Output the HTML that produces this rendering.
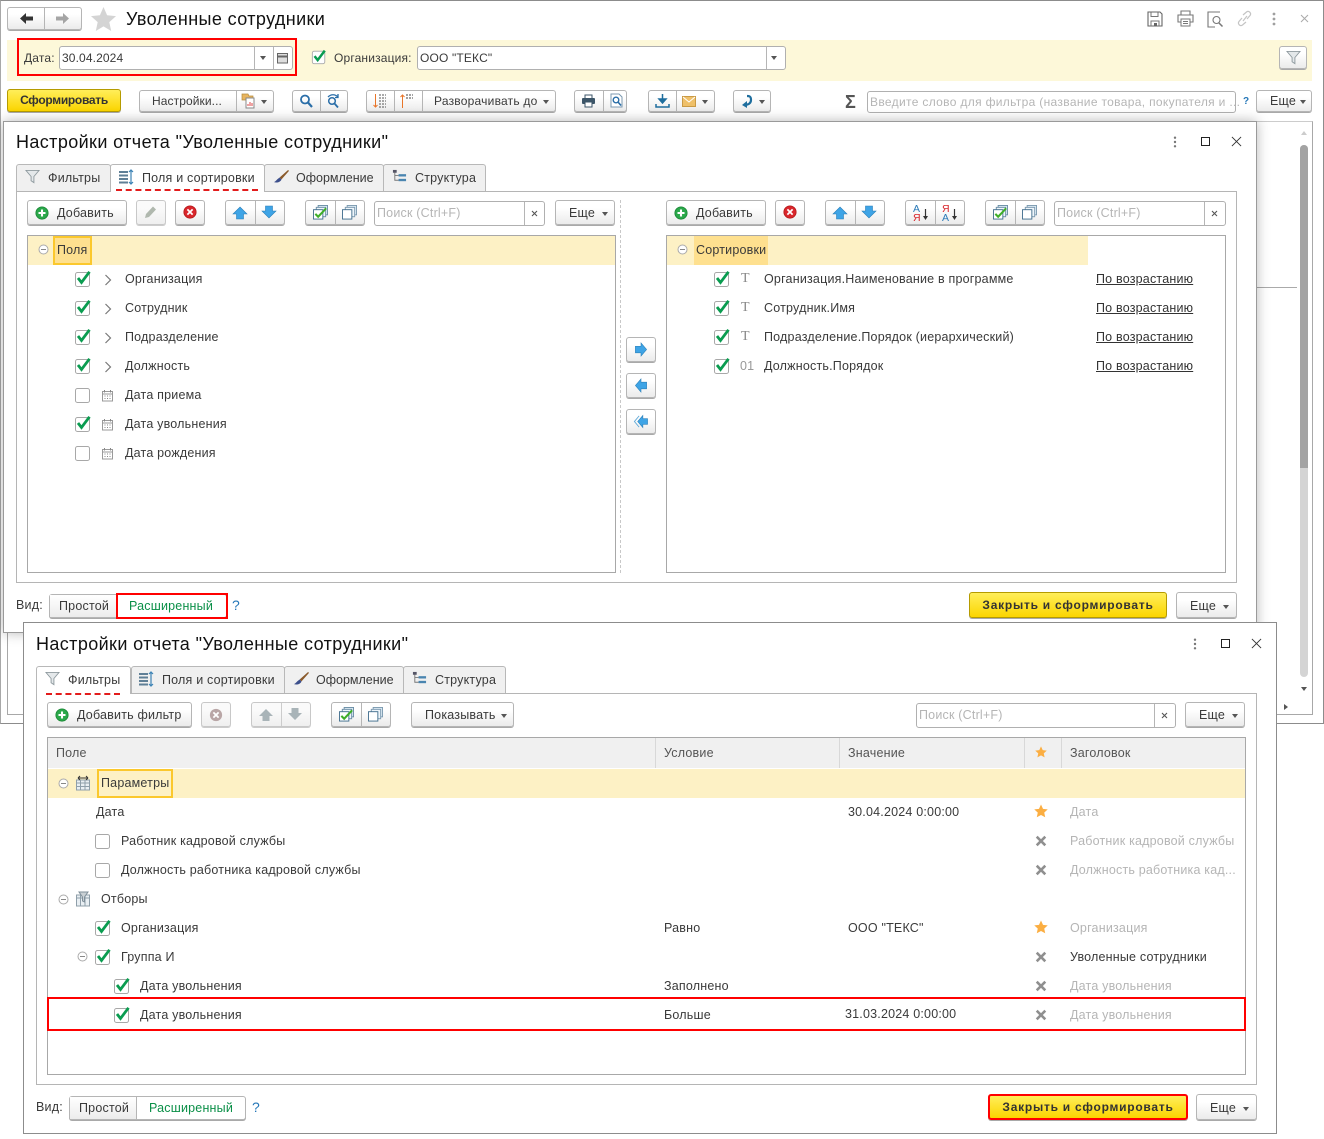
<!DOCTYPE html>
<html lang="ru"><head><meta charset="utf-8"><title>Уволенные сотрудники</title>
<style>
html,body{margin:0;padding:0;background:#fff}
#r{position:relative;width:1324px;height:1139px;overflow:hidden;background:#fff;font-family:"Liberation Sans",sans-serif;font-size:12px;color:#3a3a3a}
#r div,#r svg,#r span{position:absolute;box-sizing:border-box}
.t{white-space:nowrap;line-height:16px;height:16px;font-size:12.5px;letter-spacing:.2px}
.n{font-size:12px;letter-spacing:.16px}
.h{font-size:18px;line-height:22px;height:22px;color:#111;letter-spacing:.39px;white-space:nowrap}
.b{border:1px solid #b5b5b5;border-radius:3px;background:linear-gradient(#fff 30%,#ebebeb);box-shadow:0 1px 0 #a9a9a9}
.d{border:1px solid #c8c8c8;border-radius:3px;background:linear-gradient(#fafafa 30%,#efefef);box-shadow:0 1px 0 #ccc}
.y{border:1px solid #b59b00;border-radius:3px;background:linear-gradient(#ffee5a,#fbd500);box-shadow:0 1px 0 #a9a9a9;font-weight:bold;text-align:center;color:#333;line-height:24px;white-space:nowrap;letter-spacing:.75px}
.v{width:1px;background:#b5b5b5}
.f{border:1px solid #b0b0b0;border-radius:3px;background:#fff}
.g{color:#b5b5b5}
.u{text-decoration:underline;color:#333}
.tab{border:1px solid #b8b8b8;border-bottom:0;border-radius:3px 3px 0 0;background:#f0f0f0}
.tab.a{background:#fff;height:28px!important;z-index:2}
.red{border:2px solid #f00}
.dash{height:0;border-top:2px dashed #e31c1c}
.ar{width:0;height:0;border-left:3.5px solid transparent;border-right:3.5px solid transparent;border-top:4px solid #555}
</style></head><body><div id="r">
<svg width="0" height="0" style="left:0;top:0"><defs>
<symbol id="cb" viewBox="0 0 18 18"><rect x="1.5" y="2.500" width="14" height="14" rx="2" fill="#fff" stroke="#a8a8a8"/><path d="M4 8l3.500 4.500L15.500 1.800" fill="none" stroke="#0a9c50" stroke-width="2.800"/></symbol>
<symbol id="ce" viewBox="0 0 18 18"><rect x="1.5" y="2.500" width="14" height="14" rx="2" fill="#fff" stroke="#a8a8a8"/></symbol>
<symbol id="plus" viewBox="0 0 16 16"><circle cx="8" cy="8" r="7" fill="#2aa84a" stroke="#1d8a38"/><path d="M8 4v8M4 8h8" stroke="#fff" stroke-width="2.4"/></symbol>
<symbol id="del" viewBox="0 0 16 16"><circle cx="8" cy="8" r="7" fill="#d9262c" stroke="#b71c1c"/><path d="M5 5l6 6M11 5l-6 6" stroke="#fff" stroke-width="2"/></symbol>
<symbol id="dg" viewBox="0 0 16 16"><circle cx="8" cy="8" r="7" fill="#b9a6a6"/><path d="M5 5l6 6M11 5l-6 6" stroke="#fff" stroke-width="2"/></symbol>
<symbol id="up" viewBox="0 0 16 14"><path d="M8 1l7 7h-3.500v5h-7v-5H1z" fill="#3ea4e6" stroke="#2a7fb8" stroke-width=".6"/></symbol>
<symbol id="dn" viewBox="0 0 16 14"><path d="M4.500 1h7v5H15l-7 7-7-7h3.500z" fill="#3ea4e6" stroke="#2a7fb8" stroke-width=".6"/></symbol>
<symbol id="ug" viewBox="0 0 16 14"><path d="M8 1l7 7h-3.500v5h-7v-5H1z" fill="#a9b4b8"/></symbol>
<symbol id="dgg" viewBox="0 0 16 14"><path d="M4.500 1h7v5H15l-7 7-7-7h3.500z" fill="#a9b4b8"/></symbol>
<symbol id="rt" viewBox="0 0 14 16"><path d="M1 4.500h6V1l6 7-6 7v-3.500H1z" fill="#3ea4e6" stroke="#2a7fb8" stroke-width=".6"/></symbol>
<symbol id="lt" viewBox="0 0 14 16"><path d="M13 4.500H7V1L1 8l6 7v-3.500h6z" fill="#3ea4e6" stroke="#2a7fb8" stroke-width=".6"/></symbol>
<symbol id="ll" viewBox="0 0 16 16"><path d="M15 5h-5V1.500L4.500 8l5.500 6.500V11h5z" fill="#3ea4e6" stroke="#2a7fb8" stroke-width=".6"/><path d="M6 2L1 8l5 6" fill="none" stroke="#5fa9d8"/></symbol>
<symbol id="all" viewBox="0 0 16 16"><rect x="5.500" y=".5" width="10" height="10" fill="#dcebf5" stroke="#6c8ea6"/><rect x="3.500" y="2.500" width="10" height="10" fill="#eef5fa" stroke="#6c8ea6"/><rect x=".5" y="5" width="10" height="10" fill="#fff" stroke="#44708f"/><path d="M2.500 9.500l3 3L14 3.500" fill="none" stroke="#3fae29" stroke-width="2.200"/></symbol>
<symbol id="non" viewBox="0 0 16 16"><rect x="5.500" y=".5" width="10" height="10" fill="#dcebf5" stroke="#7c9ab0"/><rect x="3.500" y="2.500" width="10" height="10" fill="#eef5fa" stroke="#7c9ab0"/><rect x=".5" y="5" width="10" height="10" fill="#fff" stroke="#44708f"/></symbol>
<symbol id="fn" viewBox="0 0 16 16"><path d="M1 1.500h14L9.500 8v6.500l-3-2V8z" fill="#e4e8ea" stroke="#8f9a9f"/></symbol>
<symbol id="flds" viewBox="0 0 16 16"><path d="M1 2h9v2H1zM1 5.500h9v2H1zM1 9h9v2H1zM1 12.500h9v2H1z" fill="#5f7f96"/><path d="M13 1v14M11 3l2-2 2 2M11 13l2 2 2-2" fill="none" stroke="#3c83b5" stroke-width="1.200"/></symbol>
<symbol id="br" viewBox="0 0 18 16"><path d="M7 9l9-8 1 1-8 9z" fill="#8a5a2b"/><path d="M7 9l2 2c-1 3-5 4-8 3 2-1 3-3 6-5z" fill="#3c4f8c"/></symbol>
<symbol id="st" viewBox="0 0 16 16"><path d="M3 3v9h4M3 7h4" fill="none" stroke="#777"/><rect x="1" y="1" width="4" height="3" fill="#556"/><rect x="7" y="5.500" width="8" height="2.500" fill="#4a85b0"/><rect x="7" y="10.500" width="8" height="2.500" fill="#4a85b0"/></symbol>
<symbol id="cal" viewBox="0 0 13 13"><rect x="1.500" y="2.500" width="10" height="9.500" fill="none" stroke="#9a9a9a"/><path d="M1.500 5h10" stroke="#9a9a9a"/><path d="M3.500 1v2.500M9.500 1v2.500" stroke="#888"/><path d="M3.500 7h1M6 7h1M8.500 7h1M3.500 9.500h1M6 9.500h1M8.500 9.500h1" stroke="#888"/></symbol>
<symbol id="star" viewBox="0 0 16 16"><path d="M8 .5l2.300 5 5.400.6-4 3.700 1.100 5.400L8 12.500l-4.800 2.700 1.100-5.400-4-3.700 5.400-.6z" fill="#fbae42"/></symbol>
<symbol id="xg" viewBox="0 0 14 14"><path d="M2 2l10 10M12 2L2 12" stroke="#8f8f8f" stroke-width="3"/></symbol>
<symbol id="mn" viewBox="0 0 11 11"><circle cx="5.500" cy="5.500" r="4.500" fill="#fff" stroke="#aaa"/><path d="M3 5.500h5" stroke="#888"/></symbol>
<symbol id="chev" viewBox="0 0 8 12"><path d="M1.500 1l5 5-5 5" fill="none" stroke="#777" stroke-width="1.200"/></symbol>
<symbol id="drag" viewBox="0 0 4 14"><circle cx="2" cy="2" r="1.400" fill="#777"/><circle cx="2" cy="7" r="1.400" fill="#777"/><circle cx="2" cy="12" r="1.400" fill="#777"/></symbol>
<symbol id="cl" viewBox="0 0 12 12"><path d="M1 1l10 10M11 1L1 11" stroke="#333"/></symbol>
<symbol id="sx" viewBox="0 0 7 7"><path d="M1 1l5 5M6 1L1 6" stroke="#555" stroke-width="1.100"/></symbol>
<symbol id="par" viewBox="0 0 16 16"><path d="M1.500 5h13v10h-13zM5.500 5v10M10 5v10M1.500 8h13M1.500 11.500h13" fill="#e9eff3" stroke="#8f9faa"/><path d="M3 3h10M3 3l2-2M3 3l2 2M13 3l-2-2M13 3l-2 2" fill="none" stroke="#333"/></symbol>
<symbol id="otb" viewBox="0 0 16 16"><path d="M1.500 4h13v11h-13zM5.500 4v11M10 4v11M1.500 7h13" fill="#e9eff3" stroke="#8f9faa"/><path d="M4 1h9L9.500 6v5l-2-1V6z" fill="#c9d0d4" stroke="#7f8f9a"/></symbol>
<symbol id="sa" viewBox="0 0 17 18"><text x="0" y="8" font-size="10.500" fill="#2a7ab8" font-family="Liberation Sans">А</text><text x="0" y="17" font-size="10.500" fill="#d8262c" font-family="Liberation Sans">Я</text><path d="M12.500 5v8" stroke="#333" stroke-width="1.200"/><path d="M10 12h5l-2.500 4z" fill="#333"/></symbol>
<symbol id="sb" viewBox="0 0 17 18"><text x="0" y="8" font-size="10.500" fill="#d8262c" font-family="Liberation Sans">Я</text><text x="0" y="17" font-size="10.500" fill="#2a7ab8" font-family="Liberation Sans">А</text><path d="M12.500 5v8" stroke="#333" stroke-width="1.200"/><path d="M10 12h5l-2.500 4z" fill="#333"/></symbol>
</defs></svg>

<!-- main window -->
<div style="left:0;top:0;width:1324px;height:724px;border:1px solid #8c8c8c;border-left-color:#a8a8a8"></div>
<div class="b" style="left:7px;top:7px;width:75px;height:23px"></div><div class="v" style="left:44px;top:8px;height:21px"></div>
<svg style="left:19px;top:12px" width="15" height="13"><path d="M7 1L1 6.500 7 12V8.500h7v-4H7z" fill="#333"/></svg>
<svg style="left:55px;top:12px" width="15" height="13"><path d="M8 1l6 5.500L8 12V8.500H1v-4h7z" fill="#a5a5a5"/></svg>
<svg style="left:91px;top:7px" width="25" height="24"><path d="M12.500 0l3.600 8.200 8.900.9-6.700 6 1.900 8.900-7.700-4.600L4.800 24l1.900-8.900L0 9.100l8.900-.9z" fill="#d4d4d4"/></svg>
<div class="h" style="left:126px;top:8px">Уволенные сотрудники</div>
<svg style="left:1147px;top:11px" width="16" height="16"><path d="M1 1h12l2 2v12H1z" fill="none" stroke="#666" stroke-width="1.100"/><path d="M4 1.500v4h7v-4M4 15v-5h8v5" fill="none" stroke="#777"/><rect x="7" y="12" width="3" height="3" fill="#666"/></svg>
<svg style="left:1177px;top:10px" width="17" height="17"><path d="M4 5V1h9v4M3.500 12H1V5h15v7h-2.500" fill="none" stroke="#777" stroke-width="1.100"/><rect x="4" y="9" width="9" height="7" fill="#fff" stroke="#777"/><path d="M6 11.500h5M6 13.500h5" stroke="#777"/></svg>
<svg style="left:1207px;top:11px" width="17" height="17"><path d="M13 1H1v15h7" fill="none" stroke="#777" stroke-width="1.100"/><circle cx="9.500" cy="9" r="3.500" fill="none" stroke="#777" stroke-width="1.100"/><path d="M12 12l3.500 3.500" stroke="#777" stroke-width="1.500"/></svg>
<svg style="left:1236px;top:10px" width="17" height="17"><path d="M7 11l4-5M6 8l-3 3.500a2.500 2.500 0 0 0 3.500 3.500L10 12M11 9l3-3.500A2.500 2.500 0 0 0 10.500 2L7 5" fill="none" stroke="#c4c4c4" stroke-width="1.200"/></svg>
<svg style="left:1272px;top:12px" width="4" height="14" opacity=".7"><use href="#drag"/></svg>
<svg style="left:1300px;top:14px" width="9" height="9"><path d="M1 1l7 7M8 1L1 8" stroke="#aaa"/></svg>

<div style="left:7px;top:40px;width:1305px;height:41px;background:#fdf8d9"></div>
<div class="red" style="left:17px;top:38px;width:280px;height:38px"></div>
<div class="t n" style="left:24px;top:50px">Дата:</div>
<div class="f" style="left:59px;top:46px;width:234px;height:24px"></div><div class="v" style="left:254px;top:47px;height:22px"></div><div class="v" style="left:273px;top:47px;height:22px"></div>
<div class="t n" style="left:62px;top:50px;letter-spacing:.12px">30.04.2024</div>
<div class="ar" style="left:260px;top:56px"></div>
<svg style="left:276px;top:51px" width="13" height="13"><rect x="1.500" y="2.500" width="10" height="9.500" fill="#ddd" stroke="#666"/><path d="M1.500 5.500h10" stroke="#666" stroke-width="2"/></svg>
<svg style="left:311px;top:49px" width="16" height="16"><use href="#cb"/></svg>
<div class="t n" style="left:334px;top:50px">Организация:</div>
<div class="f" style="left:417px;top:46px;width:369px;height:24px"></div><div class="v" style="left:766px;top:47px;height:22px"></div>
<div class="t n" style="left:420px;top:50px">ООО "ТЕКС"</div>
<div class="ar" style="left:771px;top:56px"></div>
<div class="b" style="left:1279px;top:46px;width:28px;height:23px"></div>
<svg style="left:1286px;top:50px" width="15" height="15"><use href="#fn"/></svg>

<!-- main toolbar -->
<div class="y" style="left:7px;top:89px;width:114px;height:23px;line-height:21px;letter-spacing:-.3px">Сформировать</div>
<div class="b" style="left:139px;top:90px;width:135px;height:22px"></div><div class="v" style="left:236px;top:91px;height:20px"></div>
<div class="t n" style="left:152px;top:93px;letter-spacing:.09px">Настройки...</div>
<svg style="left:241px;top:93px" width="15" height="16"><path d="M1 1h6l1 2h4v4H1z" fill="#e8b560" stroke="#b58a3c" stroke-width=".7"/><rect x="5" y="5" width="8" height="10" fill="#fff" stroke="#888"/><path d="M7 13v-2M9 13V9M11 13v-3" stroke="#d44"/></svg>
<div class="ar" style="left:261px;top:100px"></div>
<div class="b" style="left:292px;top:90px;width:56px;height:22px"></div><div class="v" style="left:320px;top:91px;height:20px"></div>
<svg style="left:299px;top:94px" width="15" height="14"><circle cx="6" cy="5.500" r="4" fill="none" stroke="#2a6ea8" stroke-width="1.800"/><path d="M9 8.500l4 4.500" stroke="#2a6ea8" stroke-width="2.200"/></svg>
<svg style="left:326px;top:93px" width="16" height="15"><circle cx="6" cy="8" r="3.300" fill="none" stroke="#2a6ea8" stroke-width="1.500"/><path d="M8.500 10.500l3.500 4" stroke="#2a6ea8" stroke-width="1.800"/><path d="M2 4c3-3 7-3 10 0M12 1v3.500H9" fill="none" stroke="#2a6ea8" stroke-width="1.300"/></svg>
<div class="b" style="left:366px;top:90px;width:190px;height:22px"></div><div class="v" style="left:394px;top:91px;height:20px"></div><div class="v" style="left:422px;top:91px;height:20px"></div>
<svg style="left:373px;top:93px" width="15" height="16"><path d="M2.500 1v13M.5 12l2 2 2-2" fill="none" stroke="#e8762a"/><path d="M6 2h7M6 5h7M6 8h7M6 11h7M6 14h7" stroke="#555" stroke-dasharray="2 1"/></svg>
<svg style="left:400px;top:93px" width="15" height="16"><path d="M2.500 15V2M.5 4l2-2 2 2" fill="none" stroke="#e8762a"/><path d="M6 2h7M6 5h7" stroke="#444" stroke-dasharray="2 1"/></svg>
<div class="t n" style="left:434px;top:93px;letter-spacing:.22px">Разворачивать до</div>
<div class="ar" style="left:543px;top:100px"></div>
<div class="b" style="left:574px;top:90px;width:53px;height:22px"></div><div class="v" style="left:603px;top:91px;height:20px"></div>
<svg style="left:581px;top:94px" width="15" height="14"><path d="M4 4V1h7v3" fill="none" stroke="#3c5568"/><rect x="1" y="4" width="13" height="6" rx="1" fill="#3c5568"/><rect x="4" y="8" width="7" height="5" fill="#fff" stroke="#3c5568"/></svg>
<svg style="left:610px;top:93px" width="13" height="15"><path d="M1 1h8l3 3v10H1z" fill="#fff" stroke="#7c9ab0"/><circle cx="6" cy="7" r="2.800" fill="none" stroke="#2a6ea8" stroke-width="1.400"/><path d="M8 9l3 3.500" stroke="#2a6ea8" stroke-width="1.600"/></svg>
<div class="b" style="left:648px;top:90px;width:67px;height:22px"></div><div class="v" style="left:676px;top:91px;height:20px"></div>
<svg style="left:655px;top:94px" width="15" height="14"><path d="M7.500 0v6M4 5l3.500 4L11 5z" fill="#1e6e9e" stroke="#1e6e9e" stroke-width="1.500"/><path d="M1 10v3h13v-3" fill="none" stroke="#1e6e9e" stroke-width="1.500"/></svg>
<svg style="left:682px;top:96px" width="14" height="11"><rect x=".5" y=".5" width="13" height="10" fill="#efc069" stroke="#c99a45"/><path d="M1 1l6 5 6-5" fill="none" stroke="#fff"/></svg>
<div class="ar" style="left:702px;top:100px"></div>
<div class="b" style="left:733px;top:90px;width:38px;height:22px"></div>
<svg style="left:741px;top:94px" width="13" height="14"><path d="M5 11H3c3 0 7-1 7-5s-2-4-4-4" fill="none" stroke="#1e6e9e" stroke-width="2.200"/><path d="M6 7l-5 4 5 3z" fill="#1e6e9e"/></svg>
<div class="ar" style="left:759px;top:100px"></div>
<div class="t" style="left:845px;top:92px;font-size:18px;line-height:20px;height:20px;color:#555;font-weight:bold">Σ</div>
<div class="f" style="left:867px;top:91px;width:369px;height:22px"></div>
<div class="t n g" style="left:870px;top:94px;letter-spacing:.33px">Введите слово для фильтра (название товара, покупателя и ...</div>
<div class="t n" style="left:1243px;top:94px;color:#2577b8;font-size:10px;font-weight:bold">?</div>
<div class="b" style="left:1256px;top:90px;width:56px;height:22px"></div>
<div class="t" style="left:1270px;top:93px">Еще</div><div class="ar" style="left:1300px;top:100px"></div>

<!-- report frame -->
<div style="left:7px;top:121px;width:1306px;height:594px;border:1px solid #a8a8a8;border-top-color:#ccc"></div>
<div style="left:1250px;top:287px;width:47px;height:1px;background:#aaa"></div>
<div style="left:1300px;top:145px;width:8px;height:532px;border-radius:4px;background:#d4d4d4"></div>
<div style="left:1300px;top:145px;width:8px;height:323px;border-radius:4px 4px 0 0;background:#a3a3a3"></div>
<div style="left:1301px;top:131px;width:0;height:0;border-left:3px solid transparent;border-right:3px solid transparent;border-bottom:4px solid #ccc"></div>
<div style="left:1301px;top:687px;width:0;height:0;border-left:3px solid transparent;border-right:3px solid transparent;border-top:4px solid #555"></div>
<div style="left:1284px;top:704px;width:0;height:0;border-top:3px solid transparent;border-bottom:3px solid transparent;border-left:4px solid #555"></div>

<!-- DIALOG 1 -->
<div style="left:3px;top:121px;width:1254px;height:512px;background:#fff;border:1px solid #9a9a9a;box-shadow:0 0 12px rgba(0,0,0,.28)"></div>
<div class="h" style="left:16px;top:131px">Настройки отчета "Уволенные сотрудники"</div>
<svg style="left:1173px;top:136px" width="4" height="12"><use href="#drag"/></svg>
<div style="left:1201px;top:137px;width:9px;height:9px;border:1px solid #222"></div>
<svg style="left:1231px;top:136px" width="11" height="11"><use href="#cl"/></svg>
<div style="left:16px;top:191px;width:1221px;height:392px;border:1px solid #b5b5b5"></div>
<div class="tab" style="left:16px;top:164px;width:95px;height:27px"></div>
<div class="tab a" style="left:110px;top:164px;width:155px;height:28px"></div>
<div class="tab" style="left:264px;top:164px;width:120px;height:27px"></div>
<div class="tab" style="left:383px;top:164px;width:103px;height:27px"></div>
<svg style="left:25px;top:169px;z-index:3" width="15" height="15"><use href="#fn"/></svg><div class="t" style="left:48px;top:170px;z-index:3">Фильтры</div>
<svg style="left:118px;top:169px;z-index:3" width="16" height="16"><use href="#flds"/></svg><div class="t" style="left:142px;top:170px;z-index:3">Поля и сортировки</div>
<div class="dash" style="left:116px;top:189px;width:142px;z-index:3"></div>
<svg style="left:273px;top:169px;z-index:3" width="17" height="15"><use href="#br"/></svg><div class="t" style="left:296px;top:170px;z-index:3;letter-spacing:0">Оформление</div>
<svg style="left:392px;top:169px;z-index:3" width="15" height="15"><use href="#st"/></svg><div class="t" style="left:415px;top:170px;z-index:3">Структура</div>

<!-- left toolbar -->
<div class="b" style="left:27px;top:200px;width:100px;height:25px"></div>
<svg style="left:35px;top:206px" width="14" height="14"><use href="#plus"/></svg><div class="t" style="left:57px;top:205px">Добавить</div>
<div class="d" style="left:136px;top:200px;width:30px;height:25px"></div>
<svg style="left:144px;top:205px" width="14" height="14"><path d="M1 13l1-4 7-7.500 3 3L5 12z" fill="#b0b8ae"/></svg>
<div class="b" style="left:175px;top:200px;width:30px;height:25px"></div>
<svg style="left:183px;top:205px" width="14" height="14"><use href="#del"/></svg>
<div class="b" style="left:225px;top:200px;width:60px;height:25px"></div><div class="v" style="left:255px;top:201px;height:23px"></div>
<svg style="left:232px;top:206px" width="16" height="14"><use href="#up"/></svg><svg style="left:261px;top:205px" width="16" height="14"><use href="#dn"/></svg>
<div class="b" style="left:305px;top:200px;width:60px;height:25px"></div><div class="v" style="left:335px;top:201px;height:23px"></div>
<svg style="left:313px;top:205px" width="15" height="15"><use href="#all"/></svg><svg style="left:342px;top:205px" width="15" height="15"><use href="#non"/></svg>
<div class="f" style="left:374px;top:201px;width:171px;height:25px"></div><div class="v" style="left:524px;top:202px;height:23px"></div>
<div class="t g" style="left:377px;top:205px">Поиск (Ctrl+F)</div>
<svg style="left:531px;top:210px" width="7" height="7"><use href="#sx"/></svg>
<div class="b" style="left:555px;top:200px;width:60px;height:25px"></div><div class="t" style="left:569px;top:205px">Еще</div><div class="ar" style="left:602px;top:212px"></div>

<!-- left tree -->
<div style="left:27px;top:235px;width:589px;height:338px;border:1px solid #a8a8a8"></div>
<div style="left:28px;top:236px;width:587px;height:29px;background:#fdf1c5"></div>
<svg style="left:38px;top:244px" width="11" height="11"><use href="#mn"/></svg>
<div style="left:53px;top:236px;width:39px;height:29px;background:#fee08f;border:2px solid #fbc82d"></div>
<div class="t" style="left:57px;top:242px">Поля</div>
<svg style="left:74px;top:270px" width="18" height="18"><use href="#cb"/></svg><svg style="left:104px;top:274px" width="8" height="12"><use href="#chev"/></svg><div class="t" style="left:125px;top:271px">Организация</div>
<svg style="left:74px;top:299px" width="18" height="18"><use href="#cb"/></svg><svg style="left:104px;top:303px" width="8" height="12"><use href="#chev"/></svg><div class="t" style="left:125px;top:300px">Сотрудник</div>
<svg style="left:74px;top:328px" width="18" height="18"><use href="#cb"/></svg><svg style="left:104px;top:332px" width="8" height="12"><use href="#chev"/></svg><div class="t" style="left:125px;top:329px">Подразделение</div>
<svg style="left:74px;top:357px" width="18" height="18"><use href="#cb"/></svg><svg style="left:104px;top:361px" width="8" height="12"><use href="#chev"/></svg><div class="t" style="left:125px;top:358px">Должность</div>
<svg style="left:74px;top:386px" width="18" height="18"><use href="#ce"/></svg><svg style="left:101px;top:389px" width="13" height="13"><use href="#cal"/></svg><div class="t" style="left:125px;top:387px">Дата приема</div>
<svg style="left:74px;top:415px" width="18" height="18"><use href="#cb"/></svg><svg style="left:101px;top:418px" width="13" height="13"><use href="#cal"/></svg><div class="t" style="left:125px;top:416px">Дата увольнения</div>
<svg style="left:74px;top:444px" width="18" height="18"><use href="#ce"/></svg><svg style="left:101px;top:447px" width="13" height="13"><use href="#cal"/></svg><div class="t" style="left:125px;top:445px">Дата рождения</div>

<!-- middle -->
<div style="left:620px;top:200px;width:0;height:373px;border-left:1px dashed #c8c8c8"></div>
<div class="b" style="left:626px;top:337px;width:30px;height:25px"></div><svg style="left:634px;top:342px" width="14" height="15"><use href="#rt"/></svg>
<div class="b" style="left:626px;top:373px;width:30px;height:25px"></div><svg style="left:634px;top:378px" width="14" height="15"><use href="#lt"/></svg>
<div class="b" style="left:626px;top:409px;width:30px;height:25px"></div><svg style="left:633px;top:414px" width="16" height="15"><use href="#ll"/></svg>

<!-- right toolbar -->
<div class="b" style="left:666px;top:200px;width:100px;height:25px"></div>
<svg style="left:674px;top:206px" width="14" height="14"><use href="#plus"/></svg><div class="t" style="left:696px;top:205px">Добавить</div>
<div class="b" style="left:775px;top:200px;width:30px;height:25px"></div>
<svg style="left:783px;top:205px" width="14" height="14"><use href="#del"/></svg>
<div class="b" style="left:825px;top:200px;width:60px;height:25px"></div><div class="v" style="left:855px;top:201px;height:23px"></div>
<svg style="left:832px;top:206px" width="16" height="14"><use href="#up"/></svg><svg style="left:861px;top:205px" width="16" height="14"><use href="#dn"/></svg>
<div class="b" style="left:905px;top:200px;width:60px;height:25px"></div><div class="v" style="left:935px;top:201px;height:23px"></div>
<svg style="left:913px;top:204px" width="17" height="18"><use href="#sa"/></svg>
<svg style="left:942px;top:204px" width="17" height="18"><use href="#sb"/></svg>
<div class="b" style="left:985px;top:200px;width:60px;height:25px"></div><div class="v" style="left:1015px;top:201px;height:23px"></div>
<svg style="left:993px;top:205px" width="15" height="15"><use href="#all"/></svg><svg style="left:1022px;top:205px" width="15" height="15"><use href="#non"/></svg>
<div class="f" style="left:1054px;top:201px;width:172px;height:25px"></div><div class="v" style="left:1204px;top:202px;height:23px"></div>
<div class="t g" style="left:1057px;top:205px">Поиск (Ctrl+F)</div>
<svg style="left:1211px;top:210px" width="7" height="7"><use href="#sx"/></svg>

<!-- right tree -->
<div style="left:666px;top:235px;width:560px;height:338px;border:1px solid #a8a8a8"></div>
<div style="left:667px;top:236px;width:421px;height:29px;background:#fdf1c5"></div>
<div style="left:694px;top:236px;width:74px;height:29px;background:#fee08f"></div>
<svg style="left:677px;top:244px" width="11" height="11"><use href="#mn"/></svg>
<div class="t" style="left:696px;top:242px">Сортировки</div>
<svg style="left:713px;top:270px" width="18" height="18"><use href="#cb"/></svg><div class="t g" style="left:741px;top:271px;color:#888;font-family:'Liberation Serif',serif;font-size:14px">T</div><div class="t" style="left:764px;top:271px">Организация.Наименование в программе</div><div class="t u" style="left:1096px;top:271px">По возрастанию</div>
<svg style="left:713px;top:299px" width="18" height="18"><use href="#cb"/></svg><div class="t g" style="left:741px;top:300px;color:#888;font-family:'Liberation Serif',serif;font-size:14px">T</div><div class="t" style="left:764px;top:300px">Сотрудник.Имя</div><div class="t u" style="left:1096px;top:300px">По возрастанию</div>
<svg style="left:713px;top:328px" width="18" height="18"><use href="#cb"/></svg><div class="t g" style="left:741px;top:329px;color:#888;font-family:'Liberation Serif',serif;font-size:14px">T</div><div class="t" style="left:764px;top:329px">Подразделение.Порядок (иерархический)</div><div class="t u" style="left:1096px;top:329px">По возрастанию</div>
<svg style="left:713px;top:357px" width="18" height="18"><use href="#cb"/></svg><div class="t g" style="left:740px;top:358px;color:#999">01</div><div class="t" style="left:764px;top:358px">Должность.Порядок</div><div class="t u" style="left:1096px;top:358px">По возрастанию</div>

<!-- footer 1 -->
<div class="t" style="left:16px;top:597px">Вид:</div>
<div class="b" style="left:49px;top:594px;width:178px;height:24px;background:#fff"></div>
<div style="left:50px;top:595px;width:67px;height:22px;background:linear-gradient(#fff,#ececec)"></div>
<div class="t" style="left:59px;top:598px">Простой</div>
<div class="red" style="left:116px;top:593px;width:112px;height:26px"></div>
<div class="t" style="left:129px;top:598px;color:#0a8f47">Расширенный</div>
<div class="t" style="left:232px;top:597px;color:#2577b8;font-size:14px">?</div>
<div class="y" style="left:969px;top:592px;width:198px;height:26px">Закрыть и сформировать</div>
<div class="b" style="left:1176px;top:592px;width:61px;height:26px"></div><div class="t" style="left:1190px;top:598px">Еще</div><div class="ar" style="left:1223px;top:605px"></div>

<!-- DIALOG 2 -->
<div style="left:23px;top:622px;width:1254px;height:512px;background:#fff;border:1px solid #8c8c8c"></div>
<div class="h" style="left:36px;top:633px">Настройки отчета "Уволенные сотрудники"</div>
<svg style="left:1193px;top:638px" width="4" height="12"><use href="#drag"/></svg>
<div style="left:1221px;top:639px;width:9px;height:9px;border:1px solid #222"></div>
<svg style="left:1251px;top:638px" width="11" height="11"><use href="#cl"/></svg>
<div style="left:36px;top:693px;width:1221px;height:392px;border:1px solid #b5b5b5"></div>
<div class="tab" style="left:131px;top:666px;width:154px;height:27px"></div>
<div class="tab" style="left:284px;top:666px;width:120px;height:27px"></div>
<div class="tab" style="left:403px;top:666px;width:103px;height:27px"></div>
<div class="tab a" style="left:36px;top:666px;width:95px;height:28px"></div>
<svg style="left:45px;top:671px;z-index:3" width="15" height="15"><use href="#fn"/></svg><div class="t" style="left:68px;top:672px;z-index:3">Фильтры</div>
<div class="dash" style="left:46px;top:693px;width:74px;z-index:3"></div>
<svg style="left:138px;top:671px;z-index:3" width="16" height="16"><use href="#flds"/></svg><div class="t" style="left:162px;top:672px;z-index:3">Поля и сортировки</div>
<svg style="left:293px;top:671px;z-index:3" width="17" height="15"><use href="#br"/></svg><div class="t" style="left:316px;top:672px;z-index:3;letter-spacing:0">Оформление</div>
<svg style="left:412px;top:671px;z-index:3" width="15" height="15"><use href="#st"/></svg><div class="t" style="left:435px;top:672px;z-index:3">Структура</div>

<div class="b" style="left:47px;top:702px;width:145px;height:25px"></div>
<svg style="left:55px;top:708px" width="14" height="14"><use href="#plus"/></svg><div class="t" style="left:77px;top:707px">Добавить фильтр</div>
<div class="d" style="left:201px;top:702px;width:30px;height:25px"></div>
<svg style="left:209px;top:708px" width="14" height="14"><use href="#dg"/></svg>
<div class="d" style="left:251px;top:702px;width:60px;height:25px"></div><div class="v" style="left:281px;top:703px;height:23px;background:#ccc"></div>
<svg style="left:258px;top:708px" width="16" height="14"><use href="#ug"/></svg><svg style="left:287px;top:707px" width="16" height="14"><use href="#dgg"/></svg>
<div class="b" style="left:331px;top:702px;width:60px;height:25px"></div><div class="v" style="left:361px;top:703px;height:23px"></div>
<svg style="left:339px;top:707px" width="15" height="15"><use href="#all"/></svg><svg style="left:368px;top:707px" width="15" height="15"><use href="#non"/></svg>
<div class="b" style="left:411px;top:702px;width:103px;height:25px"></div><div class="t" style="left:425px;top:707px">Показывать</div><div class="ar" style="left:501px;top:714px"></div>
<div class="f" style="left:916px;top:703px;width:260px;height:25px"></div><div class="v" style="left:1154px;top:704px;height:23px"></div>
<div class="t g" style="left:919px;top:707px">Поиск (Ctrl+F)</div>
<svg style="left:1161px;top:712px" width="7" height="7"><use href="#sx"/></svg>
<div class="b" style="left:1185px;top:702px;width:60px;height:25px"></div><div class="t" style="left:1199px;top:707px">Еще</div><div class="ar" style="left:1232px;top:714px"></div>

<!-- table -->
<div style="left:47px;top:737px;width:1199px;height:338px;border:1px solid #a8a8a8"></div>
<div style="left:48px;top:738px;width:1197px;height:30px;background:#f0f0f0"></div>
<div style="left:655px;top:738px;width:1px;height:30px;background:#d8d8d8"></div>
<div style="left:839px;top:738px;width:1px;height:30px;background:#d8d8d8"></div>
<div style="left:1024px;top:738px;width:1px;height:30px;background:#d8d8d8"></div>
<div style="left:1061px;top:738px;width:1px;height:30px;background:#d8d8d8"></div>
<div class="t" style="left:56px;top:745px;color:#555">Поле</div>
<div class="t" style="left:664px;top:745px;color:#555">Условие</div>
<div class="t" style="left:848px;top:745px;color:#555">Значение</div>
<svg style="left:1035px;top:746px" width="12" height="12"><use href="#star"/></svg>
<div class="t" style="left:1070px;top:745px;color:#555">Заголовок</div>
<div style="left:48px;top:769px;width:1197px;height:29px;background:#fdf1c5"></div>
<svg style="left:58px;top:778px" width="11" height="11"><use href="#mn"/></svg>
<svg style="left:75px;top:775px" width="16" height="16"><use href="#par"/></svg>
<div style="left:97px;top:769px;width:76px;height:29px;background:#fdf1c5;border:2px solid #fbc82d"></div>
<div class="t" style="left:101px;top:775px">Параметры</div>

<div class="t" style="left:96px;top:804px">Дата</div>
<div class="t" style="left:848px;top:804px">30.04.2024 0:00:00</div>
<svg style="left:1034px;top:804px" width="14" height="14"><use href="#star"/></svg>
<div class="t g" style="left:1070px;top:804px">Дата</div>

<svg style="left:94px;top:832px" width="18" height="18"><use href="#ce"/></svg>
<div class="t" style="left:121px;top:833px">Работник кадровой службы</div>
<svg style="left:1035px;top:835px" width="12" height="12"><use href="#xg"/></svg>
<div class="t g" style="left:1070px;top:833px">Работник кадровой службы</div>

<svg style="left:94px;top:861px" width="18" height="18"><use href="#ce"/></svg>
<div class="t" style="left:121px;top:862px">Должность работника кадровой службы</div>
<svg style="left:1035px;top:864px" width="12" height="12"><use href="#xg"/></svg>
<div class="t g" style="left:1070px;top:862px">Должность работника кад...</div>

<svg style="left:58px;top:894px" width="11" height="11"><use href="#mn"/></svg>
<svg style="left:75px;top:891px" width="16" height="16"><use href="#otb"/></svg>
<div class="t" style="left:101px;top:891px">Отборы</div>

<svg style="left:94px;top:919px" width="18" height="18"><use href="#cb"/></svg>
<div class="t" style="left:121px;top:920px">Организация</div>
<div class="t" style="left:664px;top:920px">Равно</div>
<div class="t" style="left:848px;top:920px">ООО "ТЕКС"</div>
<svg style="left:1034px;top:920px" width="14" height="14"><use href="#star"/></svg>
<div class="t g" style="left:1070px;top:920px">Организация</div>

<svg style="left:77px;top:951px" width="11" height="11"><use href="#mn"/></svg>
<svg style="left:94px;top:948px" width="18" height="18"><use href="#cb"/></svg>
<div class="t" style="left:121px;top:949px">Группа И</div>
<svg style="left:1035px;top:951px" width="12" height="12"><use href="#xg"/></svg>
<div class="t" style="left:1070px;top:949px">Уволенные сотрудники</div>

<svg style="left:113px;top:977px" width="18" height="18"><use href="#cb"/></svg>
<div class="t" style="left:140px;top:978px">Дата увольнения</div>
<div class="t" style="left:664px;top:978px">Заполнено</div>
<svg style="left:1035px;top:980px" width="12" height="12"><use href="#xg"/></svg>
<div class="t g" style="left:1070px;top:978px">Дата увольнения</div>

<svg style="left:113px;top:1006px" width="18" height="18"><use href="#cb"/></svg>
<div class="t" style="left:140px;top:1007px">Дата увольнения</div>
<div class="t" style="left:664px;top:1007px">Больше</div>
<div class="t" style="left:845px;top:1006px">31.03.2024 0:00:00</div>
<svg style="left:1035px;top:1009px" width="12" height="12"><use href="#xg"/></svg>
<div class="t g" style="left:1070px;top:1007px">Дата увольнения</div>
<div class="red" style="left:47px;top:997px;width:1199px;height:34px"></div>

<!-- footer 2 -->
<div class="t" style="left:36px;top:1099px">Вид:</div>
<div class="b" style="left:69px;top:1096px;width:177px;height:24px;background:#fff"></div>
<div style="left:70px;top:1097px;width:67px;height:22px;background:linear-gradient(#fff,#ececec);border-right:1px solid #b5b5b5"></div>
<div class="t" style="left:79px;top:1100px">Простой</div>
<div class="t" style="left:149px;top:1100px;color:#0a8f47">Расширенный</div>
<div class="t" style="left:252px;top:1099px;color:#2577b8;font-size:14px">?</div>
<div class="y" style="left:988px;top:1094px;width:200px;height:26px;border:2px solid #f00;line-height:22px">Закрыть и сформировать</div>
<div class="b" style="left:1196px;top:1094px;width:61px;height:26px"></div><div class="t" style="left:1210px;top:1100px">Еще</div><div class="ar" style="left:1243px;top:1107px"></div>
</div></body></html>
